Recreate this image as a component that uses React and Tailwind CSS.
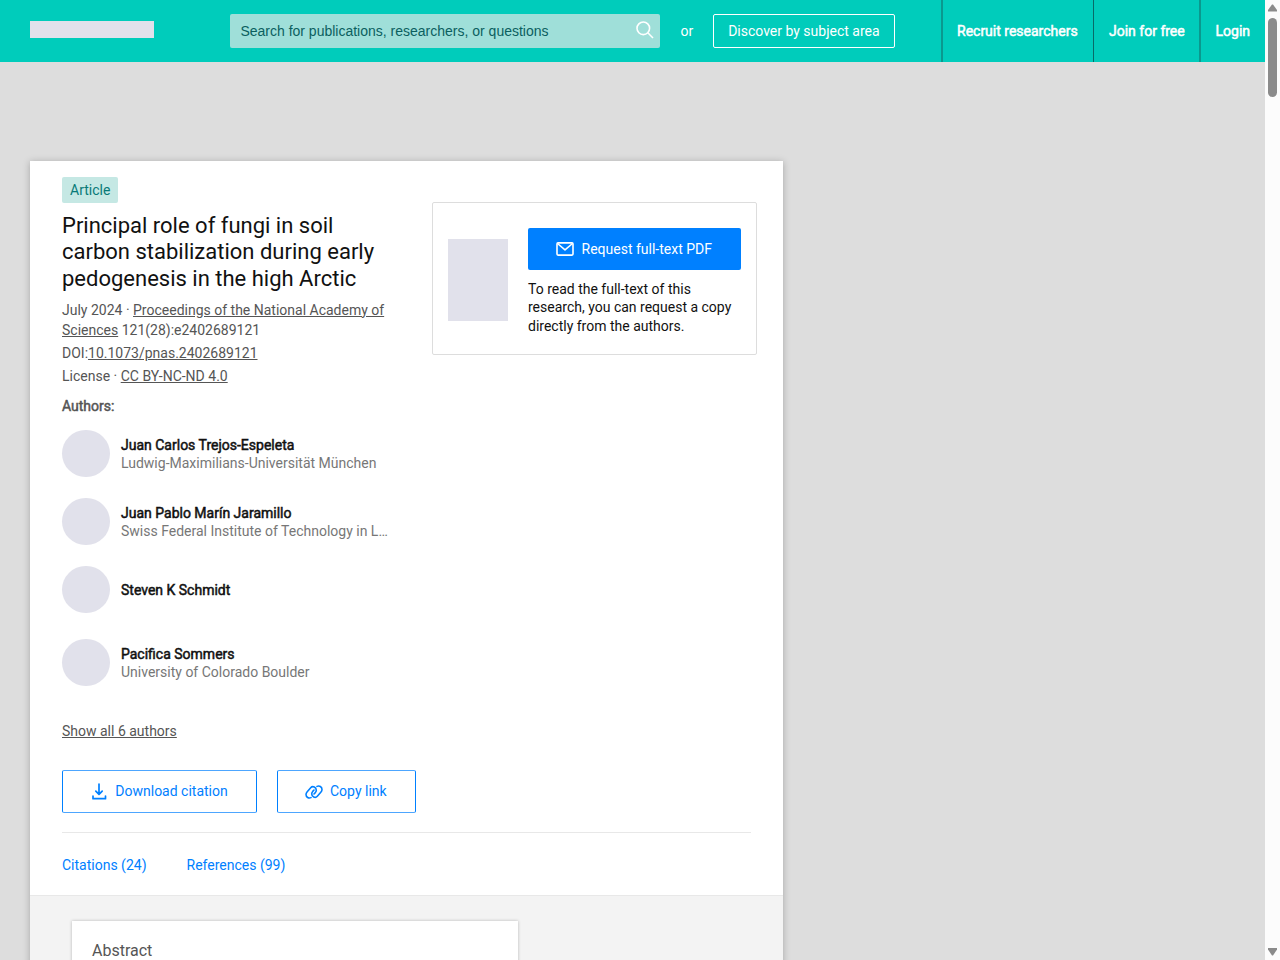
import React from "react";

const authors = [
  { name: "Juan Carlos Trejos-Espeleta", org: "Ludwig-Maximilians-Universität München", row: "h-[68px]" },
  { name: "Juan Pablo Marín Jaramillo", org: "Swiss Federal Institute of Technology in L…", row: "h-[68px]" },
  { name: "Steven K Schmidt", org: null, row: "h-[73px]" },
  { name: "Pacifica Sommers", org: "University of Colorado Boulder", row: "h-[68px]" },
];

function Header() {
  return (
    <header className="flex h-[62px] w-full shrink-0 bg-[#00ccbb] text-sm text-white">
      <div className="ml-[30px] mt-[21px] h-[17px] w-[124px] bg-[#e1e1eb]" />
      <div className="ml-[76.4px] mt-[14px] flex h-[34px] w-[430px] items-center justify-between rounded-[2px] bg-[#9fdfd9] pl-[10px] pr-[6px]">
        <span className="font-['Liberation_Sans',sans-serif] text-[14px] text-[#0b605f]">
          Search for publications, researchers, or questions
        </span>
        <svg width="18" height="18" viewBox="0 0 18 18" fill="none" stroke="white" strokeWidth="1.6" className="mb-[3px]">
          <circle cx="7.300" cy="7.300" r="6.300" />
          <path d="M11.800 11.800 17 17" />
        </svg>
      </div>
      <span className="ml-5 mt-[21px] leading-5">or</span>
      <div className="ml-5 mt-[14px] flex h-[34px] w-[181.500px] items-center justify-center rounded-[2px] border border-white">
        Discover by subject area
      </div>
      <nav className="ml-auto flex leading-[62px] [-webkit-text-stroke:0.5px_white]">
        <span className="w-[152px] border-l-2 border-[#0a988e] pl-[14px]">Recruit researchers</span>
        <span className="w-[106px] border-l border-[#086b68] pl-[15px]">Join for free</span>
        <span className="w-[66px] border-l-2 border-[#0a988e] pl-[14.500px]">Login</span>
      </nav>
    </header>
  );
}

function Scrollbar() {
  return (
    <div className="flex h-full w-[15px] shrink-0 flex-col items-center justify-between bg-[#fcfcfc]">
      <div className="flex flex-col items-center">
        <svg width="9" height="18" viewBox="0 0 9 18" fill="#8b8b8b">
          <path d="M4 4.500h1L9 10v1.500H0V10Z" />
        </svg>
        <div className="h-[79px] w-[9px] rounded-full bg-[#8b8b8b]" />
      </div>
      <svg width="9" height="14" viewBox="0 0 9 14" fill="#8b8b8b">
        <path d="M0 2h9v1.500L5 9.500H4L0 3.500Z" />
      </svg>
    </div>
  );
}

function RequestBox() {
  return (
    <div className="mt-[41px] flex h-[153.400px] w-[324.500px] rounded-[2px] border border-[#dddddd] pl-[15px]">
      <div className="mt-[36.400px] h-[82px] w-[60px] bg-[#e1e1eb]" />
      <div className="ml-5 mt-[25px] w-[212.500px]">
        <div className="flex h-[42px] items-center rounded-[2px] bg-[#0080ff] pl-7 text-sm text-white">
          <svg width="18" height="14" viewBox="0 0 18 14" fill="none" stroke="white" strokeWidth="1.600" strokeLinejoin="round" className="mr-[7.500px]">
            <rect x="1" y="0.900" width="16" height="12.200" rx="1" />
            <path d="M1.500 1.500 9 7.800l7.500-6.300" />
          </svg>
          Request full-text PDF
        </div>
        <p className="mt-[9.800px] text-sm leading-[18.500px] text-[#111111]">
          To read the full-text of this
          <br />
          research, you can request a copy
          <br />
          directly from the authors.
        </p>
      </div>
    </div>
  );
}

function Meta() {
  return (
    <div className="mt-[7.400px] text-sm leading-5 text-[#555555]">
      <p>
        July 2024 · <span className="underline">Proceedings of the National Academy of</span>
        <br />
        <span className="underline">Sciences</span> 121(28):e2402689121
      </p>
      <p className="mt-[3px]">
        DOI:<span className="underline">10.1073/pnas.2402689121</span>
      </p>
      <p className="mt-[3px]">
        License · <span className="underline">CC BY-NC-ND 4.0</span>
      </p>
      <p className="mt-[10px] [-webkit-text-stroke:0.5px_#555555]">Authors:</p>
    </div>
  );
}

function Author({ name, org, row }) {
  return (
    <li className={"flex " + row}>
      <div className="mt-[0.500px] h-[47.500px] w-[48px] shrink-0 rounded-full bg-[#e1e1eb]" />
      <div className="ml-[11px] flex h-[49px] flex-col justify-center whitespace-nowrap text-sm leading-[18px]">
        <span className="text-[#111111] [-webkit-text-stroke:0.5px_#111111]">{name}</span>
        {org && <span className="text-[#777777]">{org}</span>}
      </div>
    </li>
  );
}

export default function App() {
  return (
    <div className="flex h-[960px] w-[1280px] overflow-hidden bg-[#dddddd] font-[Roboto,sans-serif]">
      <div className="flex h-full w-[1265px] flex-col">
        <Header />
        <main className="ml-[30px] mt-[99px] flex h-[820px] w-[753px] flex-col bg-white shadow-[0_1px_7px_rgba(0,0,0,0.25)]">
          <div className="flex h-[609px] pl-8">
            <section className="w-[370px]">
              <span className="mt-4 flex h-[26px] w-[56.400px] items-center rounded-[2px] bg-[#c5e8e4] pl-2 text-sm text-[#087a78]">
                Article
              </span>
              <h1 className="mt-[9.600px] whitespace-nowrap text-[22px] leading-[26.600px] text-[#111111]">
                Principal role of fungi in soil
                <br />
                carbon stabilization during early
                <br />
                pedogenesis in the high Arctic
              </h1>
              <Meta />
              <ul className="mt-[13.500px]">
                {authors.map((a) => (
                  <Author key={a.name} {...a} />
                ))}
              </ul>
              <p className="mt-[15px] text-sm leading-5 text-[#555555] underline">Show all 6 authors</p>
            </section>
            <RequestBox />
          </div>
          <div className="ml-8 flex gap-5 text-sm text-[#0080ff]">
            <div className="flex h-[43px] w-[195px] items-center rounded-[2px] border border-x-[#0080ff] border-y-[#4da6ff] pl-[29px]">
              <svg width="15" height="17" viewBox="0 0 15 17" fill="none" stroke="currentColor" strokeWidth="1.700" strokeLinecap="round" strokeLinejoin="round" className="mr-[8.300px]">
                <path d="M7 1v10M3.800 8.200 7 11.400l3.200-3.200M1 13v2.700h12.500V13" />
              </svg>
              <span className="mb-[2px]">Download citation</span>
            </div>
            <div className="flex h-[43px] w-[139px] items-center rounded-[2px] border border-x-[#0080ff] border-y-[#4da6ff] pl-[27px]">
              <svg width="18" height="14" viewBox="0 0 18 14" fill="none" stroke="currentColor" strokeWidth="1.600" strokeLinecap="round" className="mr-[7px]">
                <path d="M6 12.600C3.700 13.700 1 12.200 1 9.500 1 8.300 1.500 7.500 2.200 6.700L5.700 2.700C7.800.3 11.300 2.200 11.300 5.200c0 1-.4 1.700-1 2.400L9 9" />
                <path d="M12 1.400C14.300.3 17 1.800 17 4.500c0 1.200-.5 2-1.200 2.800L12.300 11.300C10.200 13.700 6.700 11.800 6.700 8.800c0-1 .4-1.700 1-2.400L9 5" />
              </svg>
              <span className="mb-[2px]">Copy link</span>
            </div>
          </div>
          <div className="ml-8 mt-[19px] h-px w-[689px] shrink-0 bg-[#e8e8e8]" />
          <div className="ml-8 mt-[22px] flex h-[40px] gap-10 text-sm leading-5 text-[#0080ff]">
            <span>Citations (24)</span>
            <span>References (99)</span>
          </div>
          <div className="flex grow border-t border-[#e8e8e8] bg-[#f3f3f3] pl-[42px] pt-[25px]">
            <article className="h-[60px] w-[446px] bg-white pl-5 pt-[18px] text-base text-[#555555] shadow-[0_0_3px_rgba(0,0,0,0.25)]">
              Abstract
            </article>
          </div>
        </main>
      </div>
      <Scrollbar />
    </div>
  );
}
